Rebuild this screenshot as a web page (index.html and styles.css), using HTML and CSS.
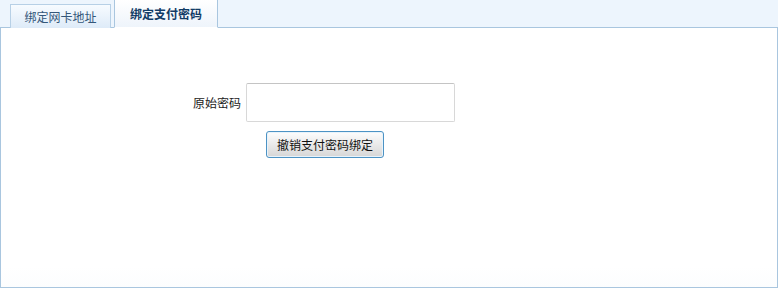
FILE: index.html
```html
<!DOCTYPE html>
<html>
<head>
  <meta charset="UTF-8">
  <title>绑定支付密码</title>
  <link rel="stylesheet" href="styles.css">
</head>
<body>
  <div class="panel">
    <div class="tabs">
      <a class="tab">绑定网卡地址</a>
      <a class="tab active">绑定支付密码</a>
    </div>
    <div class="content">
      <form class="form">
        <div class="row">
          <label class="label" for="old-pwd">原始密码</label>
          <input class="input" id="old-pwd" type="password">
        </div>
        <div class="actions">
          <button class="btn" type="button">撤销支付密码绑定</button>
        </div>
      </form>
    </div>
  </div>
</body>
</html>
```

FILE: styles.css
```css
body {
  margin: 0;
  font-family: "Liberation Sans", "Noto Sans CJK SC", sans-serif;
  font-size: 12px;
  color: #222;
  background: #fff;
}
.panel {
  width: 778px;
}
.tabs {
  display: flex;
  align-items: flex-end;
  height: 27px;
  padding-left: 10px;
  background: #edf5fd;
  border-bottom: 1px solid #a9c6df;
}
.tab {
  display: flex;
  align-items: center;
  justify-content: center;
  width: 99px;
  height: 23px;
  margin-right: 3px;
  margin-bottom: -1px;
  border: 1px solid #b7d0e6;
  border-bottom: none;
  background: linear-gradient(#f7fbff, #deebf8);
  color: #34577a;
  cursor: pointer;
}
.tab.active {
  width: 102px;
  height: 27px;
  background: linear-gradient(#ffffff, #eef4fb);
  border-color: #a9c6df;
  border-bottom: 1px solid #fff;
  color: #123c66;
  font-weight: bold;
}
.content {
  height: 259px;
  border: 1px solid #a9c6df;
  border-top: none;
  background: linear-gradient(#fff 92%, #fcfdfe);
}
.form {
  padding-top: 55px;
}
.row {
  display: flex;
  align-items: center;
}
.label {
  width: 245px;
  text-align: right;
  padding-right: 5px;
  box-sizing: border-box;
}
.input {
  width: 209px;
  height: 39px;
  box-sizing: border-box;
  border: 1px solid #d8d8d8;
  border-top-color: #c4c4c4;
  border-radius: 2px;
  padding: 0 4px;
  font-size: 12px;
}
.actions {
  padding: 9px 0 0 265px;
}
.btn {
  width: 118px;
  height: 27px;
  border: 1px solid #4d93c4;
  border-radius: 3px;
  background: linear-gradient(#fdfdfd, #e6e6e6 60%, #d6d6d6);
  font-family: "Liberation Sans", "Noto Sans CJK SC", sans-serif;
  font-size: 12px;
  color: #111;
  padding: 0;
  box-shadow: inset 0 0 0 1px #e8f3fb;
}
```
